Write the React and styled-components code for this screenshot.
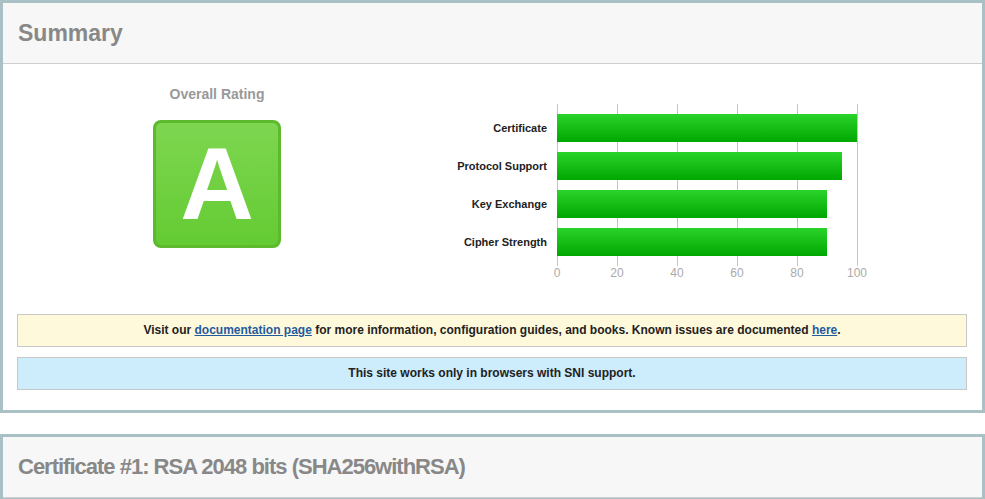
import React from 'react'
import styled, { createGlobalStyle } from 'styled-components'

const GlobalStyle = createGlobalStyle`
    body {
        margin: 0;
        background: #ffffff;
        font-family: "Liberation Sans", Arial, sans-serif;
    }
`

const scores = [
    { label: 'Certificate', value: 100 },
    { label: 'Protocol Support', value: 95 },
    { label: 'Key Exchange', value: 90 },
    { label: 'Cipher Strength', value: 90 },
]

const ticks = [0, 20, 40, 60, 80, 100]

const App = () => {
    return (
        <Page>
            <GlobalStyle />
            <Panel>
                <PanelHeader $size={23}>Summary</PanelHeader>
                <PanelBody>
                    <SummaryRow>
                        <RatingColumn>
                            <RatingTitle>Overall Rating</RatingTitle>
                            <GradeBox>A</GradeBox>
                        </RatingColumn>
                        <Chart>
                            <Labels>
                                {scores.map((s) => (
                                    <BarLabel key={s.label}>{s.label}</BarLabel>
                                ))}
                            </Labels>
                            <Plot>
                                {scores.map((s) => (
                                    <Bar key={s.label} style={{ width: s.value * 3 }} />
                                ))}
                            </Plot>
                            <Ticks>
                                {ticks.map((t) => (
                                    <Tick key={t}>{t}</Tick>
                                ))}
                            </Ticks>
                        </Chart>
                    </SummaryRow>
                    <Notice $tone="warning">
                        Visit our <NoticeLink href="#">documentation page</NoticeLink> for more information, configuration guides, and books. Known issues are documented <NoticeLink href="#">here</NoticeLink>.
                    </Notice>
                    <Notice $tone="info">This site works only in browsers with SNI support.</Notice>
                </PanelBody>
            </Panel>
            <Panel>
                <PanelHeader $size={22} $tight>Certificate #1: RSA 2048 bits (SHA256withRSA)</PanelHeader>
            </Panel>
        </Page>
    )
}

const Page = styled.div`
    display: flex;
    flex-direction: column;
    gap: 21px;
`
const Panel = styled.section`
    border: 3px solid #a9c1c4;
    background: #ffffff;
`
const PanelHeader = styled.h2`
    margin: 0;
    height: 60px;
    padding-left: 15px;
    display: flex;
    align-items: center;
    background: #f7f7f7;
    border-bottom: 1px solid #cfcfcf;
    color: #888888;
    font-size: ${(p) => p.$size}px;
    letter-spacing: ${(p) => (p.$tight ? '-1px' : 'normal')};
    font-weight: bold;
`
const PanelBody = styled.div`
    padding: 0 15px 20px 14px;
`
const SummaryRow = styled.div`
    display: flex;
    height: 236px;
    margin-bottom: 14px;
`
const RatingColumn = styled.div`
    width: 400px;
    display: flex;
    flex-direction: column;
    align-items: center;
    padding-top: 22px;
`
const RatingTitle = styled.div`
    color: #999999;
    font-size: 14px;
    font-weight: bold;
    line-height: 16px;
    margin-bottom: 18px;
`
const GradeBox = styled.div`
    width: 128px;
    height: 128px;
    box-sizing: border-box;
    border: 3px solid #5cba2c;
    border-radius: 8px;
    background: linear-gradient(to bottom, #7ed650, #64cb33);
    color: #ffffff;
    font-size: 102px;
    font-weight: bold;
    display: flex;
    align-items: center;
    justify-content: center;
    line-height: 1;
`
const Chart = styled.div`
    display: grid;
    grid-template-columns: 140px 301px;
    margin-top: 40px;
    align-self: flex-start;
`
const Labels = styled.div`
    display: flex;
    flex-direction: column;
    gap: 10px;
    padding: 10px 10px 10px 0;
`
const BarLabel = styled.div`
    height: 28px;
    line-height: 28px;
    text-align: right;
    font-size: 11px;
    font-weight: bold;
    color: #222222;
`
const Plot = styled.div`
    display: flex;
    flex-direction: column;
    gap: 10px;
    padding: 10px 0;
    background-image: repeating-linear-gradient(to right, #c4c4c4 0 1px, transparent 1px 60px);
`
const Bar = styled.div`
    height: 28px;
    background: linear-gradient(to bottom, #2ad32a, #00a700);
`
const Ticks = styled.div`
    grid-column: 2;
    display: flex;
    margin-left: -30px;
`
const Tick = styled.div`
    flex: 0 0 60px;
    text-align: center;
    font-size: 12px;
    line-height: 14px;
    color: #aaaaaa;
`
const Notice = styled.div`
    border: 1px solid #c8c8c8;
    background: ${(p) => (p.$tone === 'warning' ? '#fff9dc' : '#cdecfc')};
    height: 31px;
    line-height: 31px;
    text-align: center;
    font-size: 12px;
    font-weight: bold;
    color: #222222;
    & + & {
        margin-top: 10px;
    }
`
const NoticeLink = styled.a`
    color: #1f5b9e;
    text-decoration: underline;
`

export default App
